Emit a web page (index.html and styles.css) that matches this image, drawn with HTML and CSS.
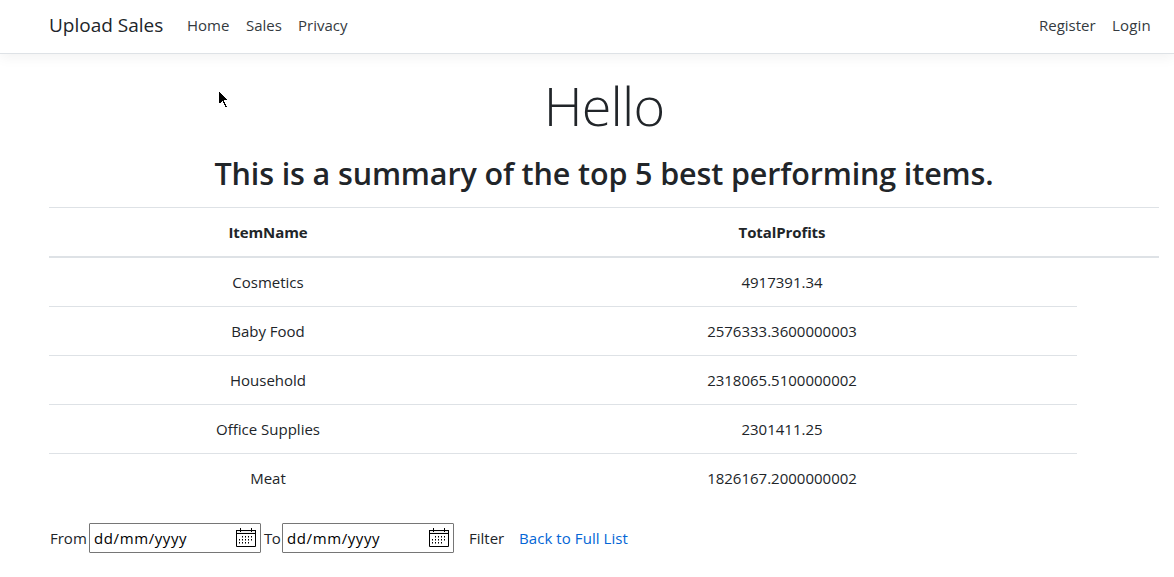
FILE: index.html
```html
<!DOCTYPE html>
<html lang="en">
<head>
<meta charset="utf-8">
<title>Upload Sales</title>
<link rel="stylesheet" href="styles.css">
</head>
<body>
<header class="navbar">
  <a class="brand">Upload Sales</a>
  <nav class="nav-main">
    <a class="nav-home">Home</a>
    <a class="nav-sales">Sales</a>
    <a class="nav-privacy">Privacy</a>
  </nav>
  <nav class="nav-account">
    <a class="nav-register">Register</a>
    <a class="nav-login">Login</a>
  </nav>
</header>
<main class="content">
  <h1 class="hello">Hello</h1>
  <h2 class="summary">This is a summary of the top 5 best performing items.</h2>
  <table class="items">
    <colgroup><col class="col-name"><col class="col-profit"><col></colgroup>
    <thead><tr><th>ItemName</th><th>TotalProfits</th><th></th></tr></thead>
    <tbody>
      <tr><td>Cosmetics</td><td>4917391.34</td></tr>
      <tr><td>Baby Food</td><td>2576333.3600000003</td></tr>
      <tr><td>Household</td><td>2318065.5100000002</td></tr>
      <tr><td>Office Supplies</td><td>2301411.25</td></tr>
      <tr><td>Meat</td><td>1826167.2000000002</td></tr>
    </tbody>
  </table>
  <div class="filters">
    <span class="label-from">From</span>
    <div class="date"><span>dd/mm/yyyy</span>
      <svg class="calendar" width="20" height="20" viewBox="0 0 20 20"><path fill="#eee" d="M1 3h18v2H1z"/><path fill="none" stroke="#000" d="M.5 2v16.500h19V2M0 2.500h20M0 5.500h20M4.500 0v4M15.500 0v4"/><path fill="none" stroke="#000" stroke-dasharray="1 2" d="M6 8.500h11M3 11.500h14M3 14.500h11"/><path fill="none" stroke="#777" stroke-dasharray="1 2" d="M6 9.500h11M3 12.500h14M3 15.500h11"/></svg>
    </div>
    <span class="label-to">To</span>
    <div class="date"><span>dd/mm/yyyy</span>
      <svg class="calendar" width="20" height="20" viewBox="0 0 20 20"><path fill="#eee" d="M1 3h18v2H1z"/><path fill="none" stroke="#000" d="M.5 2v16.500h19V2M0 2.500h20M0 5.500h20M4.500 0v4M15.500 0v4"/><path fill="none" stroke="#000" stroke-dasharray="1 2" d="M6 8.500h11M3 11.500h14M3 14.500h11"/><path fill="none" stroke="#777" stroke-dasharray="1 2" d="M6 9.500h11M3 12.500h14M3 15.500h11"/></svg>
    </div>
    <a class="filter">Filter</a>
    <a class="back">Back to Full List</a>
  </div>
</main>
<svg class="cursor" width="10" height="18" viewBox="0 0 10 18" shape-rendering="crispEdges"><path d="M0 0h1v1h1v1h1v1h1v1h1v1h1v1h1v1h1v1H5v2h1v2h1v2h1v1H6v-2H5v-2H4V9H3v1H2v1H0z"/></svg>
</body>
</html>
```
FILE: styles.css
```css
* { box-sizing: border-box; }
body {
  margin: 0;
  height: 577px;
  overflow: hidden;
  background: #fff;
  color: #212529;
  font: 15px/24px "Open Sans", "Noto Sans", sans-serif;
}
.navbar {
  display: flex;
  align-items: center;
  height: 54px;
  padding: 0 23px 3px 49px;
  border-bottom: 1px solid #dee2e6;
  box-shadow: 0 4px 12px rgba(0, 0, 0, .05);
  color: #343a40;
  white-space: nowrap;
}
.brand { width: 138px; font-size: 19px; color: #212529; }
.nav-main, .nav-account { display: flex; gap: 16px; }
.nav-account { margin-left: auto; }
.nav-home { width: 43px; }
.nav-sales { width: 36px; }
.nav-privacy { width: 50px; }
.nav-register { width: 57px; }
.nav-login { width: 39px; letter-spacing: .15px; }
.content { padding: 18px 15px 0 49px; white-space: nowrap; }
.hello {
  margin: 0;
  height: 67px;
  font-size: 54px;
  line-height: 67px;
  font-weight: 300;
  letter-spacing: -.8px;
  text-align: center;
}
.summary {
  margin: 15px 0;
  height: 38px;
  font-size: 30.500px;
  line-height: 38px;
  font-weight: 600;
  letter-spacing: -.13px;
  text-align: center;
}
.items {
  width: 1110px;
  table-layout: fixed;
  border-spacing: 0;
  text-align: center;
}
.col-name { width: 438px; }
.col-profit { width: 590px; }
.items th, .items td { padding: 12px 0; }
.items th {
  height: 51px;
  border-top: 1px solid #dee2e6;
  border-bottom: 2px solid #dee2e6;
  font-weight: 700;
  letter-spacing: -.1px;
}
.items td { height: 49px; border-bottom: 1px solid #dee2e6; }
.items tr:last-child td { border-bottom-color: transparent; }
.filters {
  display: flex;
  align-items: center;
  margin-top: 20px;
  padding-left: 1px;
}
.label-from { width: 39px; }
.date {
  display: flex;
  align-items: center;
  justify-content: space-between;
  width: 172px;
  height: 30px;
  padding: 0 4px;
  border: 1px solid #767676;
  border-radius: 1px;
  color: #000;
  letter-spacing: .6px;
}
.label-to { width: 21px; padding-left: 3px; letter-spacing: -.4px; }
.filter { width: 50px; margin-left: 15px; }
.back { color: #0366d6; letter-spacing: .07px; }
.cursor { position: absolute; left: 219px; top: 92px; }
```
